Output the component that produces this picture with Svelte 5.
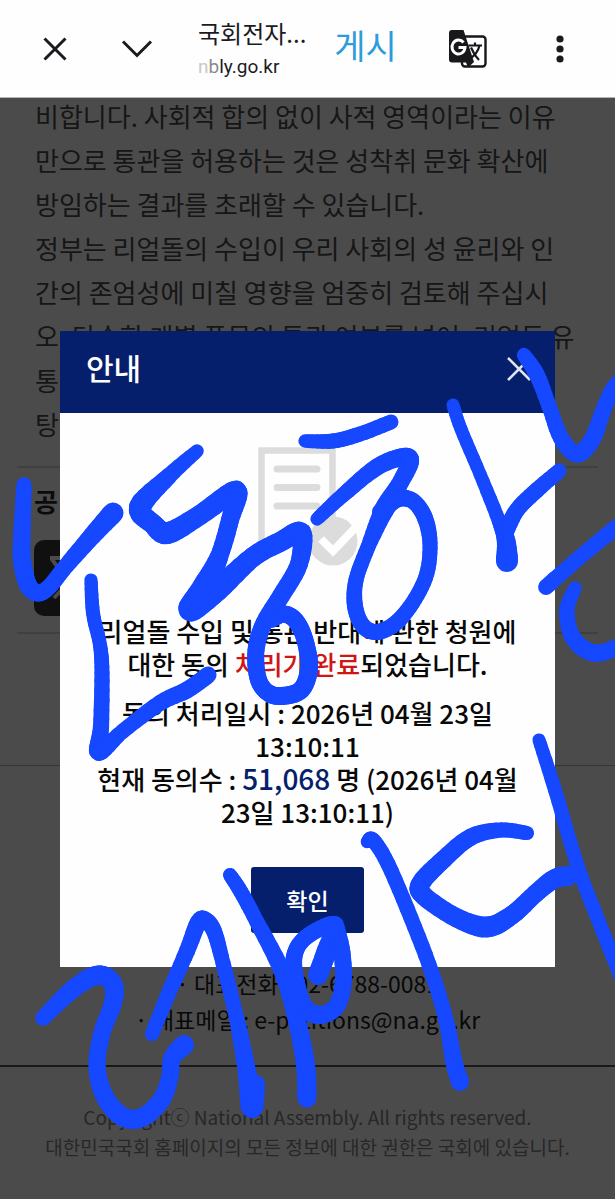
<script>
  // Pen strokes of the freehand note: each point is [x, y, pen width].
  const strokes = [
    [[24, 485, 15], [22, 533, 17], [22, 560, 18], [28, 585, 18], [38, 593, 17], [49, 587, 16], [66, 566, 16], [92, 536, 18], [113, 513, 21]],
    [[91, 580, 13], [93, 613, 14], [100, 645, 14], [102, 673, 15], [101, 727, 16], [99, 752, 18], [123, 731, 15], [160, 703, 16], [187, 690, 17], [208, 675, 17]],
    [[197, 451, 13], [169, 476, 16], [140, 507, 22], [153, 524, 20], [168, 533, 22], [200, 515, 20], [236, 491, 21], [230, 520, 18], [219, 557, 18], [204, 587, 23], [191, 609, 25], [217, 590, 23], [253, 557, 20], [280, 542, 20], [301, 533, 21], [299, 564, 18], [281, 596, 18], [264, 623, 17], [256, 650, 17], [258, 678, 17], [267, 692, 17], [281, 696, 18], [301, 690, 18], [309, 668, 18], [305, 640, 17], [296, 621, 17], [284, 614, 17], [271, 620, 16]],
    [[305, 441, 13], [333, 441, 15], [360, 434, 15], [391, 422, 15]],
    [[317, 519, 13], [343, 495, 15], [377, 467, 17], [403, 457, 18], [410, 462, 18], [399, 485, 17], [384, 510, 20], [368, 547, 15], [356, 580, 15], [355, 606, 16], [363, 626, 16], [378, 632, 16], [397, 622, 16], [415, 599, 15], [427, 573, 15], [430, 543, 15], [425, 518, 16], [413, 501, 16], [397, 499, 17], [381, 512, 18]],
    [[453, 405, 13], [461, 429, 13], [480, 474, 13], [499, 521, 14], [506, 540, 18], [507, 561, 22]],
    [[505, 533, 17], [517, 510, 16], [537, 490, 16], [559, 471, 15]],
    [[524, 355, 14], [537, 375, 16], [549, 406, 15], [561, 438, 16], [577, 454, 17], [592, 440, 17], [603, 411, 16], [612, 390, 15], [622, 378, 15]],
    [[546, 587, 16], [580, 557, 15], [624, 521, 16]],
    [[575, 588, 13], [567, 609, 15], [571, 634, 16], [584, 649, 17], [600, 653, 17], [622, 645, 16]],
    [[43, 1018, 15], [73, 989, 18], [98, 975, 19], [113, 984, 19], [113, 1003, 18], [102, 1033, 17], [97, 1067, 17], [105, 1097, 18], [123, 1117, 19], [143, 1117, 19], [162, 1099, 18], [170, 1076, 17], [172, 1058, 17], [184, 1045, 20]],
    [[152, 1034, 14], [167, 997, 15], [187, 951, 16], [198, 923, 17], [205, 920, 17], [214, 931, 16], [223, 963, 15], [237, 1020, 15], [247, 1072, 18], [252, 1107, 22], [256, 1084, 18]],
    [[230, 875, 14], [241, 892, 15], [257, 922, 15], [284, 976, 17], [300, 1034, 18], [306, 1070, 19], [307, 1098, 19]],
    [[318, 975, 20], [327, 950, 20], [334, 925, 17], [312, 933, 16], [297, 948, 16], [294, 970, 17], [303, 1005, 18], [319, 1015, 18], [336, 1007, 17], [343, 985, 17], [342, 953, 17], [335, 925, 18]],
    [[367, 842, 12], [373, 840, 15], [388, 864, 15], [411, 918, 15], [432, 973, 15], [446, 1020, 15], [454, 1062, 17], [460, 1082, 18]],
    [[527, 833, 14], [501, 830, 15], [471, 837, 17], [444, 859, 18], [421, 883, 19], [424, 896, 19], [457, 918, 19], [487, 927, 21], [512, 915, 19], [535, 894, 18], [554, 879, 19], [568, 876, 20]],
    [[539, 740, 13], [555, 790, 14], [578, 867, 14], [599, 922, 14], [624, 985, 14]]
  ];

  // Catmull-Rom segments, so that the pen width can change along a stroke.
  const segments = strokes.flatMap((s) =>
    s.slice(0, -1).flatMap((a, i) => {
      const b = s[i + 1];
      const p = s[i - 1] ?? a;
      const n = s[i + 2] ?? b;
      const at = (t, k) =>
        0.5 * (2 * a[k] + (b[k] - p[k]) * t + (2 * p[k] - 5 * a[k] + 4 * b[k] - n[k]) * t * t + (3 * a[k] - p[k] - 3 * b[k] + n[k]) * t * t * t);
      return Array.from({ length: 6 }, (_, j) => {
        const t = j / 6;
        const u = (j + 1) / 6;
        return {
          d: `M${at(t, 0).toFixed(1)} ${at(t, 1).toFixed(1)}L${at(u, 0).toFixed(1)} ${at(u, 1).toFixed(1)}`,
          w: (a[2] + (b[2] - a[2]) * u).toFixed(1)
        };
      });
    })
  );
</script>

<div class="screen">
  <header class="bar">
    <button class="icon" aria-label="닫기">
      <svg width="28" height="28" viewBox="0 0 28 28"><path d="M3.500 3.500 24.500 24.500M24.500 3.500 3.500 24.500" /></svg>
    </button>
    <button class="icon" aria-label="최소화">
      <svg width="32" height="28" viewBox="0 0 32 28"><path d="M2 6.500 16 20.500 30 6.500" /></svg>
    </button>
    <div class="site">
      <span class="site-title">국회전자...</span>
      <span class="site-url"><span class="fade">n</span><span class="fade2">b</span>ly.go.kr</span>
    </div>
    <button class="post">게시</button>
    <button class="icon translate" aria-label="번역">
      <svg width="40" height="40" viewBox="0 0 40 40">
        <rect x="14" y="7.500" width="23.500" height="30" rx="3" fill="#fff" stroke="#17171c" stroke-width="2.400" />
        <path d="M4 1H15.500L26 33 20 38.500 18 33.500H4Q1 33.500 1 30.500V4Q1 1 4 1Z" fill="#17171c" />
        <path d="M15.500 13.500A6.500 7 0 1 0 17 18.500H10.500" fill="none" stroke="#fff" stroke-width="3" />
        <path d="M20.500 16.500H34M27 13.500V16.500M31.500 16.500Q29.500 25 22 29.500M23 18.500Q26 26 31 31" stroke="#17171c" stroke-width="2.200" />
      </svg>
    </button>
    <button class="icon more" aria-label="더보기">
      <svg width="8" height="28" viewBox="0 0 8 28"><g fill="#1b1b1f"><circle cx="4" cy="4" r="3.600" /><circle cx="4" cy="14" r="3.600" /><circle cx="4" cy="24" r="3.600" /></g></svg>
    </button>
  </header>

  <div class="view">
    <main class="page">
      <p class="body">
        비합니다. 사회적 합의 없이 사적 영역이라는 이유<br />
        만으로 통관을 허용하는 것은 성착취 문화 확산에<br />
        방임하는 결과를 초래할 수 있습니다.<br />
        정부는 리얼돌의 수입이 우리 사회의 성 윤리와 인<br />
        간의 존엄성에 미칠 영향을 엄중히 검토해 주십시<br />
        오. 단순한 개별 품목의 통관 여부를 넘어, 리얼돌 유<br />
        통<br />
        탕
      </p>
      <section class="share">
        <h2>공</h2>
        <a class="x-link" href="#x" aria-label="X">
          <svg width="44" height="44" viewBox="0 0 44 44"><path d="M1 2H14L43 42H30ZM40 2 25 19M19 26 4 42" fill="none" stroke="#4b4b4b" stroke-width="4" /></svg>
        </a>
      </section>
      <footer>
        <address>
          · 대표전화 : 02-6788-0081<br />
          · 대표메일 : e-petitions@na.go.kr
        </address>
        <p class="legal">
          Copyrightⓒ National Assembly. All rights reserved.<br />
          대한민국국회 홈페이지의 모든 정보에 대한 권한은 국회에 있습니다.
        </p>
      </footer>
    </main>

    <div class="overlay">
      <div class="dialog" role="dialog" aria-labelledby="dialog-title">
        <div class="head">
          <h1 id="dialog-title">안내</h1>
          <button class="close" aria-label="닫기">
            <svg width="24" height="24" viewBox="0 0 24 24"><path d="M1 1 23 23M23 1 1 23" stroke="#dfe4f5" stroke-width="2.500" /></svg>
          </button>
        </div>
        <div class="content">
          <svg class="doc" width="100" height="120" viewBox="0 0 100 120">
            <path d="M54 94.500H3.500V3.500H74.500V70" fill="none" stroke="#dcdcdc" stroke-width="6.500" />
            <path d="M19 22H59M19 40.500H59M19 59H59" stroke="#dcdcdc" stroke-width="7" stroke-linecap="round" />
            <circle cx="75" cy="94" r="24.500" fill="#dcdcdc" />
            <path d="M63 92 75 104 97 81" fill="none" stroke="#fff" stroke-width="8" />
          </svg>
          <p>리얼돌 수입 및 통관 반대에 관한 청원에<br />대한 동의 <em>처리가 완료</em>되었습니다.</p>
          <p>
            동의 처리일시 : 2026년 04월 23일<br />13:10:11<br />
            현재 동의수 : <strong>51,068</strong> 명 (2026년 04월<br />23일 13:10:11)
          </p>
          <button class="ok">확인</button>
        </div>
      </div>
    </div>
  </div>

  <svg class="ink" viewBox="0 0 615 1199" aria-hidden="true">
    {#each segments as s}
      <path d={s.d} stroke-width={s.w} />
    {/each}
  </svg>
</div>

<style>
  :global(body) {
    margin: 0;
    background: #4b4b4b;
  }
  .screen {
    position: relative;
    display: flex;
    flex-direction: column;
    min-height: 100vh;
    overflow: hidden;
    font-family: "Noto Sans CJK KR", "Noto Sans", sans-serif;
    color: #111;
  }
  button {
    padding: 0;
    border: 0;
    background: none;
    font: inherit;
    cursor: pointer;
  }
  svg {
    display: block;
  }
  h1, h2, p {
    margin: 0;
  }
  .bar {
    position: relative;
    z-index: 1;
    display: flex;
    align-items: center;
    box-sizing: border-box;
    height: 98px;
    padding: 0 51px 0 41px;
    background: #fefefe;
    border-bottom: 1px solid #b4b4b4;
  }
  .icon svg {
    fill: none;
    stroke: #1b1b1f;
    stroke-width: 3;
  }
  .icon + .icon {
    margin-left: 52px;
  }
  .site {
    display: flex;
    flex-direction: column;
    margin-left: 45px;
    white-space: nowrap;
    color: #1b1b1f;
  }
  .site-title {
    font-size: 24px;
    line-height: 36px;
  }
  .site-url {
    font-family: Roboto, sans-serif;
    font-size: 19px;
    line-height: 32px;
  }
  .fade {
    color: #c8c8c8;
  }
  .fade2 {
    color: #8a8a8a;
  }
  .post {
    margin-left: 28px;
    padding-bottom: 8px;
    font-size: 34px;
    line-height: 40px;
    color: #2c9cdb;
  }
  .icon.translate {
    margin-left: auto;
  }
  .icon.more {
    margin-left: 68px;
  }
  .icon.more svg {
    stroke: none;
  }
  .icon.translate svg {
    stroke: none;
  }
  .view {
    position: relative;
    flex: 1;
    display: flex;
  }
  .page {
    flex: 1;
    display: flex;
    flex-direction: column;
    background: #4b4b4b;
  }
  .body {
    margin-top: -4px;
    padding: 0 17px 20px 35px;
    font-size: 26px;
    line-height: 44px;
    color: #161616;
    white-space: nowrap;
  }
  .share {
    margin: 0 17px;
    padding: 14px 17px 16px;
    border-top: 2px solid #404040;
    border-bottom: 2px solid #404040;
  }
  h2 {
    margin-bottom: 20px;
    font-size: 26px;
    line-height: 38px;
    color: #0b0b0b;
  }
  .x-link {
    display: grid;
    place-items: center;
    width: 76px;
    height: 76px;
    border-radius: 10px;
    background: #101010;
  }
  footer {
    margin-top: auto;
    border-top: 1px solid #363636;
    text-align: center;
  }
  address {
    padding: 199px 0 28px;
    border-bottom: 2px solid #191919;
    font-size: 23px;
    font-style: normal;
    line-height: 36px;
    color: #080808;
  }
  .legal {
    padding: 35px 0 37px;
    font-size: 19px;
    line-height: 30px;
    color: #272727;
    white-space: nowrap;
  }
  .overlay {
    position: absolute;
    inset: 0;
    display: grid;
    align-items: center;
    padding: 0 60px;
  }
  .dialog {
    background: #fefefe;
  }
  .head {
    display: flex;
    align-items: center;
    justify-content: space-between;
    padding: 14px 24px 24px 26px;
    background: #051f6c;
    color: #fff;
  }
  h1 {
    font-size: 30px;
    font-weight: 500;
    line-height: 44px;
  }
  .close {
    padding-top: 4px;
  }
  .content {
    display: flex;
    flex-direction: column;
    align-items: center;
    gap: 16px;
    padding: 34px 24px;
    text-align: center;
    font-size: 26px;
    font-weight: 500;
    line-height: 33px;
    color: #080808;
    white-space: nowrap;
  }
  .doc {
    margin-bottom: 31px;
  }
  em {
    font-style: normal;
    color: #cf1515;
  }
  strong {
    font-size: 28px;
    font-weight: 500;
    line-height: 32px;
    color: #051f6c;
  }
  .ok {
    margin-top: 23px;
    padding: 0 35px;
    border-radius: 3px;
    background: #051f6c;
    color: #fff;
    font-size: 23px;
    font-weight: 500;
    line-height: 66px;
  }
  .ink {
    position: absolute;
    z-index: 2;
    inset: 0;
    width: 100%;
    fill: none;
    stroke: #1548ff;
    stroke-linecap: round;
    pointer-events: none;
  }
</style>
